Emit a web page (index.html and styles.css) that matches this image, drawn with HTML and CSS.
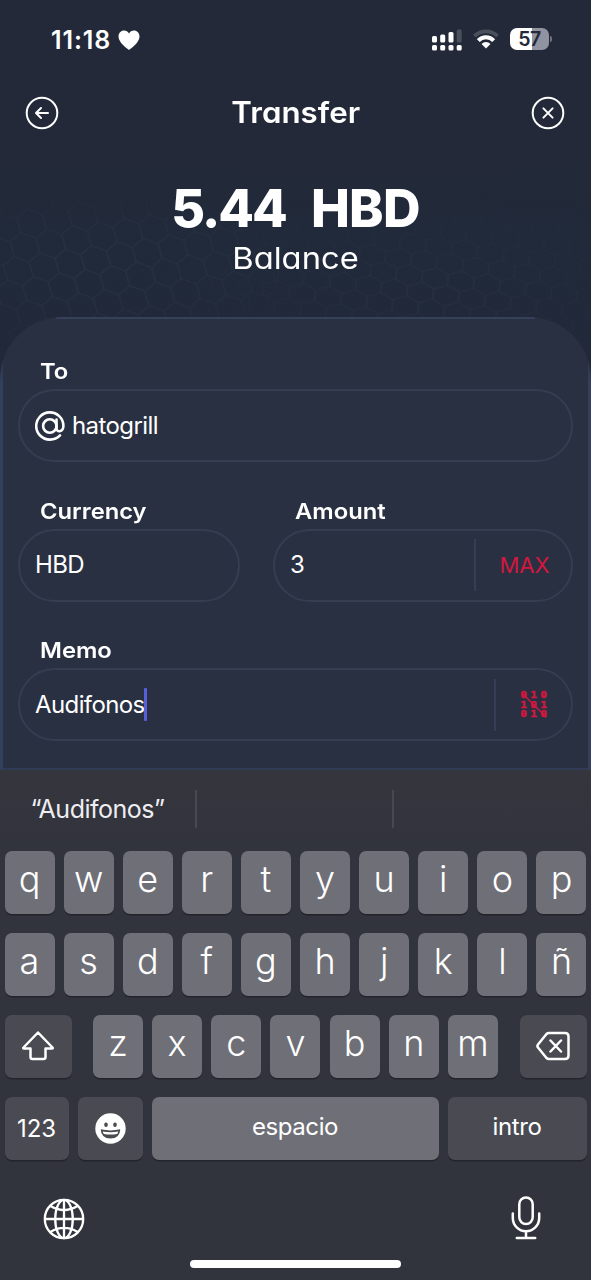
FILE: index.html
```html
<!DOCTYPE html>
<html lang="es">
<head>
<meta charset="utf-8">
<title>Transfer</title>
<link rel="stylesheet" href="styles.css">
</head>
<body>
<div class="screen">
  <svg class="honeycomb" width="591" height="200" viewBox="0 0 591 200" aria-hidden="true">
    <defs>
      <pattern id="hexA" width="26" height="45" patternUnits="userSpaceOnUse" patternTransform="rotate(-8) skewX(8)">
        <path d="M13 0v7.500L0 15v15l13 7.500V45M13 7.500L26 15v15l-13 7.500" class="hex-line"/>
      </pattern>
      <pattern id="hexB" width="26" height="45" patternUnits="userSpaceOnUse" patternTransform="translate(4 2) rotate(7) scale(1 .7)">
        <path d="M13 0v7.500L0 15v15l13 7.500V45M13 7.500L26 15v15l-13 7.500" class="hex-line"/>
      </pattern>
      <radialGradient id="fadeA" cx=".16" cy=".55" r=".42">
        <stop offset="0" stop-color="#fff"/><stop offset=".6" stop-color="#fff" stop-opacity=".6"/><stop offset="1" stop-color="#fff" stop-opacity="0"/>
      </radialGradient>
      <radialGradient id="fadeB" cx=".72" cy=".65" r=".5">
        <stop offset="0" stop-color="#fff" stop-opacity=".9"/><stop offset="1" stop-color="#fff" stop-opacity="0"/>
      </radialGradient>
      <mask id="maskA"><rect width="591" height="200" fill="url(#fadeA)"/></mask>
      <mask id="maskB"><rect width="591" height="200" fill="url(#fadeB)"/></mask>
    </defs>
    <rect width="591" height="200" fill="url(#hexA)" mask="url(#maskA)"/>
    <rect width="591" height="200" fill="url(#hexB)" mask="url(#maskB)"/>
  </svg>

  <div class="status-bar">
    <div class="clock">
      <span class="time">11:18</span>
      <svg width="22" height="21" viewBox="0 0 22 21"><path d="M11 20C8.500 18 .5 12.500 .5 6.500.5 3 3 .5 6 .5c2.200 0 4 1.200 5 3 1-1.800 2.800-3 5-3 3 0 5.500 2.500 5.500 6C21.500 12.500 13.500 18 11 20z" fill="#fff"/></svg>
    </div>
    <div class="indicators">
      <svg width="30" height="22" viewBox="0 0 30 22" fill="#fff">
        <rect x="0" y="7" width="5" height="6.500" rx="1.500"/><rect x="8.200" y="5.500" width="5" height="8" rx="1.500"/><rect x="16.500" y="3" width="5" height="10.500" rx="1.500"/><rect x="24.700" y=".5" width="5" height="13" rx="1.500" fill="#4b505d"/>
        <rect x="0" y="16" width="5" height="5.500" rx="1.500"/><rect x="8.200" y="16" width="5" height="5.500" rx="1.500"/><rect x="16.500" y="16" width="5" height="5.500" rx="1.500"/><rect x="24.700" y="16" width="5" height="5.500" rx="1.500"/>
      </svg>
      <svg width="26" height="20" viewBox="0 0 26 20" fill="none">
        <path d="M1.500 7.200a16.300 16.300 0 0 1 23 0" stroke="#4b505d" stroke-width="3.800"/>
        <path d="M5.300 11.600a10.600 10.600 0 0 1 15.400 0" stroke="#fff" stroke-width="4"/>
        <path d="M13 19.500L8.500 15a6.200 6.200 0 0 1 9 0z" fill="#fff"/>
      </svg>
      <div class="battery"><span class="battery-level">57</span></div>
    </div>
  </div>

  <header class="header">
    <svg width="34" height="34" viewBox="0 0 34 34" class="line-icon"><circle cx="17" cy="17" r="15.300"/><path d="M23 17H11.500M16 12l-5 5 5 5"/></svg>
    <h1 class="title">Transfer</h1>
    <svg width="34" height="34" viewBox="0 0 34 34" class="line-icon"><circle cx="17" cy="17" r="15.300"/><path d="M12.400 12.400l9.200 9.200M21.600 12.400l-9.200 9.200"/></svg>
  </header>

  <section class="balance">
    <div class="balance-value"><span class="amount">5.44</span><span class="unit">HBD</span></div>
    <div class="balance-label">Balance</div>
  </section>

  <main class="card">
    <div class="field">
      <span class="label">To</span>
      <div class="input">
        <svg class="at" width="30" height="30" viewBox="0 0 30 30"><circle cx="14.800" cy="15" r="6.700"/><path d="M21.500 8.600v8.200c0 2.600 1.400 3.700 3.200 3.400 2.600-.5 3.700-2.800 3.700-5.500A13.600 13.600 0 1 0 15 28.600c4 0 7.600-1.600 10-4.200"/></svg>
        <span class="value">hatogrill</span>
      </div>
    </div>
    <div class="field-row">
      <div class="field">
        <span class="label">Currency</span>
        <div class="input"><span class="value">HBD</span></div>
      </div>
      <div class="field">
        <span class="label">Amount</span>
        <div class="input"><span class="value">3</span><div class="action action-max">MAX</div></div>
      </div>
    </div>
    <div class="field">
      <span class="label">Memo</span>
      <div class="input">
        <span class="value">Audifonos</span><span class="caret"></span>
        <div class="action action-code">
          <svg width="30" height="30" viewBox="0 0 30 30" class="binary">
            <g transform="scale(1.250 1)"><text y="8.500" x="1 9 17">010</text><text y="18" x="1 9 17">101</text><text y="27.400" x="1 9 17">010</text></g>
            <path d="M2.500 2.500l25 25"/>
          </svg>
        </div>
      </div>
    </div>
  </main>

  <section class="keyboard">
    <div class="suggestions"><span class="suggestion">“Audifonos”</span><span class="suggestion"></span><span class="suggestion"></span></div>
    <div class="keys">
      <div class="row"><b>q</b><b>w</b><b>e</b><b>r</b><b>t</b><b>y</b><b>u</b><b>i</b><b>o</b><b>p</b></div>
      <div class="row"><b>a</b><b>s</b><b>d</b><b>f</b><b>g</b><b>h</b><b>j</b><b>k</b><b>l</b><b>ñ</b></div>
      <div class="row row-shift">
        <b class="dark"><svg width="34" height="30" viewBox="0 0 34 30" class="key-icon"><path d="M17 1.500L31.500 16.500q.8 1-.5 1H24.500v8.500q0 2-2 2h-11q-2 0-2-2V17.500H3q-1.300 0-.5-1z"/></svg></b>
        <div class="letters"><b>z</b><b>x</b><b>c</b><b>v</b><b>b</b><b>n</b><b>m</b></div>
        <b class="dark"><svg width="34" height="30" viewBox="0 0 34 30" class="key-icon"><path d="M13 2h16q3.500 0 3.500 3.500v19q0 3.500-3.500 3.500H13q-1.500 0-2.500-1L2 16.500q-1.200-1.500 0-3L10.500 3q1-1 2.500-1zM14.500 9.500l10.500 11M25 9.500l-10.500 11"/></svg></b>
      </div>
      <div class="row row-space">
        <b class="dark word num">123</b>
        <b class="dark"><svg width="31" height="31" viewBox="0 0 31 31"><circle cx="15.500" cy="15.500" r="15.200" fill="#fff"/><g fill="#4a4b50"><ellipse cx="11" cy="11.700" rx="1.800" ry="2.300"/><ellipse cx="20" cy="11.700" rx="1.800" ry="2.300"/><path d="M5.700 16.300q9.800 2.200 19.600 0-.4 9.200-9.800 9.200t-9.800-9.200z"/></g><path d="M7.800 18.500q7.700 1.600 15.400 0-.4 2-1.200 2.500-6.500 1.200-13 0-.8-.5-1.200-2.500z" fill="#fff"/></svg></b>
        <b class="word">espacio</b>
        <b class="dark word">intro</b>
      </div>
    </div>
    <div class="dock">
      <svg width="42" height="42" viewBox="0 0 42 42" fill="none" stroke="#fff" stroke-width="2.300"><circle cx="21" cy="21" r="19.200"/><ellipse cx="21" cy="21" rx="8.800" ry="19.200"/><path d="M21 1.800v38.400M1.800 21h38.400M7 7.800q14 8.500 28 0M7 34.200q14-8.500 28 0"/></svg>
      <svg class="mic" width="30" height="44" viewBox="0 0 30 44"><rect x="8.300" y="1.500" width="13.400" height="26.500" rx="6.700"/><path d="M1.800 17.500v4.500a13.200 13.200 0 0 0 26.400 0v-4.500M15 35.300v6.500M5.800 42h18.400"/></svg>
    </div>
    <div class="home-indicator"></div>
  </section>
</div>
</body>
</html>
```

FILE: styles.css
```css
* { box-sizing: border-box; }
body { margin: 0; background: #222938; }
.screen {
  position: relative;
  display: flex;
  flex-direction: column;
  width: 591px;
  height: 1280px;
  overflow: hidden;
  background: linear-gradient(#232939 150px, #212a3a 230px, #20283a 380px);
  color: #fff;
  font-family: Inter, "Liberation Sans", sans-serif;
}
.honeycomb { position: absolute; left: 0; top: 160px; }
.hex-line { fill: none; stroke: #2a3443; stroke-width: 1.200; }

.status-bar { position: relative; display: flex; justify-content: space-between; height: 80px; padding: 28px 42px 0 51px; }
.clock { display: flex; align-items: flex-start; gap: 7px; height: 24px; }
.clock svg { margin-top: 2px; }
.time { font-size: 25px; line-height: 24px; font-weight: 600; letter-spacing: 0.900px; }
.indicators { display: flex; align-items: flex-start; gap: 11px; }
.indicators svg { margin-top: 1px; }
.battery {
  position: relative;
  width: 39px;
  height: 22px;
  border-radius: 7px;
  background: linear-gradient(90deg, #fff 22px, #9194a0 22px);
  text-align: center;
}
.battery::after { content: ""; position: absolute; left: 40px; top: 8px; width: 2px; height: 6px; border-radius: 0 2px 2px 0; background: #6f7380; }
.battery-level { display: block; color: #232939; font-size: 19.500px; line-height: 23px; font-weight: 600; letter-spacing: -0.500px; }

.header { position: relative; display: flex; align-items: center; justify-content: space-between; height: 66px; padding: 0 25.500px 0 25px; }
.line-icon { fill: none; stroke: #fff; stroke-width: 2; stroke-linecap: round; stroke-linejoin: round; }
.title, .balance-label, .label { font-feature-settings: "cv11"; }
.title { height: 66px; margin: 0; font-size: 29.500px; line-height: 65px; font-weight: 600; transform: scaleX(1.060); }

.balance { position: relative; height: 171px; padding-top: 36px; text-align: center; }
.balance-value { display: flex; justify-content: center; gap: 25px; font-size: 52px; line-height: 54px; font-weight: 800; }
.amount { letter-spacing: -2px; }
.unit { letter-spacing: -0.700px; }
.balance-label { margin-top: 5px; font-size: 30px; line-height: 34px; transform: scaleX(1.090); }

.card {
  position: relative;
  height: 453px;
  padding: 43px 18px 0 18px;
  background:
    linear-gradient(#35415a, #35415a) 50% 0 / 479px 2px no-repeat,
    linear-gradient(#32405e00, #32405e 30px) 0 35px / 3px 100% no-repeat,
    linear-gradient(#32405e00, #32405e 30px) 100% 35px / 3px 100% no-repeat,
    linear-gradient(#303c57, #303c57) 0 100% / 100% 2px no-repeat,
    #293042;
  border-radius: 62px 62px 0 0;
}
.field-row { display: grid; grid-template-columns: 222px 300px; justify-content: space-between; }
.field { height: 139.700px; }
.label { display: block; width: max-content; height: 29px; margin-left: 21.500px; font-size: 22px; line-height: 22px; font-weight: 600; transform: scaleX(1.080); transform-origin: left; }
.input { display: flex; align-items: center; height: 73px; padding-left: 15px; border: 2px solid #353d50; border-radius: 37px; background: #293042; }
.at { margin-right: 7px; fill: none; stroke: #fff; stroke-width: 2.600; stroke-linecap: round; }
.value { font-size: 24px; line-height: 30px; letter-spacing: -0.600px; }
.caret { width: 3px; height: 33px; margin-left: -1px; background: #5660dc; border-radius: 1px; }
.action { display: flex; align-items: center; justify-content: center; height: 52px; margin-left: auto; border-left: 2px solid #353e56; color: #d4173f; font-size: 22px; }
.action-max { width: 97px; padding-left: 2px; }
.action-code { width: 77px; }
.binary { fill: #d4173f; font-family: "DejaVu Sans Mono", monospace; font-weight: 700; font-size: 9px; }
.binary text { stroke: #d4173f; stroke-width: 0.400; }
.binary path { stroke: #d4173f; stroke-width: 1.500; }

.keyboard { position: relative; flex: 1; background: linear-gradient(#35353d, #32343d 80px); }
.suggestions { display: grid; grid-template-columns: 197px 197px 197px; height: 80.500px; padding-top: 20px; }
.suggestion { height: 38px; border-right: 2px solid #474850; text-align: center; font-size: 25px; line-height: 39px; letter-spacing: -0.500px; color: #eeeef2; }
.suggestion:last-child { border: 0; }
.keys { display: grid; gap: 18.500px; padding: 0 4.500px; }
.row { display: grid; grid-template-columns: repeat(10, 50px); justify-content: space-between; height: 63.500px; }
.row-shift { grid-template-columns: 67px 405px 67px; }
.row-space { grid-template-columns: 64px 65px 287px 139px; }
.letters { display: grid; grid-template-columns: repeat(7, 50px); justify-content: space-between; }
.row b { display: flex; align-items: center; justify-content: center; height: 63.500px; padding-bottom: 7px; border-radius: 7px; background: #6f7077; box-shadow: 0 1.500px 0 #23242b; font-size: 36px; font-weight: 300; }
.row .dark { background: #4a4b52; padding-bottom: 0; }
.row .word { font-size: 24px; font-weight: 400; padding-bottom: 4px; letter-spacing: -0.400px; }
.row .num { padding-bottom: 0; letter-spacing: 0; }
.key-icon { fill: none; stroke: #fff; stroke-width: 2.500; stroke-linejoin: round; stroke-linecap: round; }
.dock { display: flex; justify-content: space-between; padding: 38px 50px 0 43px; }
.mic { margin-top: -2px; fill: none; stroke: #fff; stroke-width: 2.500; stroke-linecap: round; }
.home-indicator { position: absolute; left: 190px; bottom: 12px; width: 211px; height: 8px; border-radius: 4px; background: #fff; }
```
